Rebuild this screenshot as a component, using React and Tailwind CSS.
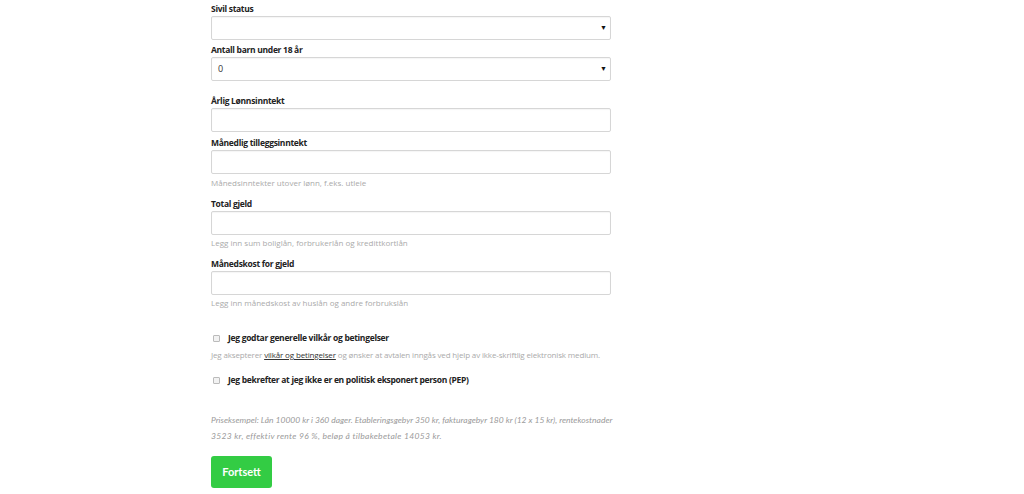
import { useState } from "react";

const labelCls =
  "block h-[12px] leading-[12px] text-[8.5px] tracking-[-0.3px] font-bold text-[#222] mb-[1px]";
const inputCls =
  "block w-full h-[24px] border border-[#d6d6d6] rounded-[2px] bg-white px-[6px] text-[9px] text-[#333] outline-none shadow-[inset_0_1px_1px_rgba(0,0,0,0.04)]";
const helpCls = "h-[12px] leading-[12px] text-[8px] text-[#aaa] whitespace-nowrap";

function SelectBox({ value }) {
  return (
    <div className={`${inputCls} flex items-center justify-between pr-[3px]`}>
      <span className="text-[9px] text-[#333]">{value}</span>
      <span className="text-[7px] text-[#111]">▼</span>
    </div>
  );
}

function Field({ label, help, className = "", helpClass = "" }) {
  return (
    <div className={className}>
      <label className={labelCls}>{label}</label>
      <input className={inputCls} />
      {help && <p className={`${helpCls} ${helpClass}`}>{help}</p>}
    </div>
  );
}

function Check({ children, className = "" }) {
  const [on, setOn] = useState(false);
  return (
    <label className={`flex items-center h-[12px] ${className}`}>
      <span
        onClick={() => setOn(!on)}
        className={`ml-[2px] w-[7px] h-[7px] border border-[#bbb] rounded-[1px] ${on ? "bg-[#33cc44]" : "bg-[#f2f2f2]"}`}
      />
      <span className="ml-[8px] text-[8.5px] tracking-[-0.3px] font-bold text-[#222] leading-[12px]">
        {children}
      </span>
    </label>
  );
}

export default function App() {
  return (
    <div className="min-h-[494px] bg-white pl-[211px] pt-[3px]" style={{ fontFamily: "'Open Sans', sans-serif" }}>
      <div className="w-[400px]">
        {/* Selects */}
        <label className={labelCls}>Sivil status</label>
        <SelectBox value="" />
        <label className={`${labelCls} mt-[4px]`}>Antall barn under 18 år</label>
        <SelectBox value="0" />

        {/* Income / debt */}
        <Field className="mt-[14px]" label="Årlig Lønnsinntekt" />
        <Field
          className="mt-[5px]"
          label="Månedlig tilleggsinntekt"
          help="Månedsinntekter utover lønn, f.eks. utleie"
          helpClass="mt-[3px]"
        />
        <Field
          className="mt-[9px]"
          label="Total gjeld"
          help="Legg inn sum boliglån, forbrukerlån og kredittkortlån"
          helpClass="mt-[2px]"
        />
        <Field
          className="mt-[9px]"
          label="Månedskost for gjeld"
          help="Legg inn månedskost av huslån og andre forbrukslån"
          helpClass="mt-[2px]"
        />

        {/* Consent */}
        <Check className="mt-[23px]">Jeg godtar generelle vilkår og betingelser</Check>
        <p className={`${helpCls} mt-[5px] tracking-[-0.15px]`}>
          Jeg aksepterer <span className="text-[#333] underline">vilkår og betingelser</span> og ønsker at avtalen
          inngås ved hjelp av ikke-skriftlig elektronisk medium.
        </p>
        <Check className="mt-[13px]">Jeg bekrefter at jeg ikke er en politisk eksponert person (PEP)</Check>

        <p
          className="mt-[26px] text-[8.5px] leading-[16px] italic text-[#9a9a9a] whitespace-nowrap"
          style={{ fontFamily: "Lato, sans-serif" }}
        >
          Priseksempel: Lån 10000 kr i 360 dager. Etableringsgebyr 350 kr, fakturagebyr 180 kr (12 x 15 kr), rentekostnader
          <br />
          <span className="tracking-[0.3px]">3523 kr, effektiv rente 96 %, beløp å tilbakebetale 14053 kr.</span>
        </p>

        <button
          className="mt-[12px] w-[61px] h-[32px] rounded-[3px] bg-[#33cc44] text-white text-[11px] font-bold"
          style={{ fontFamily: "Lato, sans-serif" }}
        >
          Fortsett
        </button>
      </div>
    </div>
  );
}
